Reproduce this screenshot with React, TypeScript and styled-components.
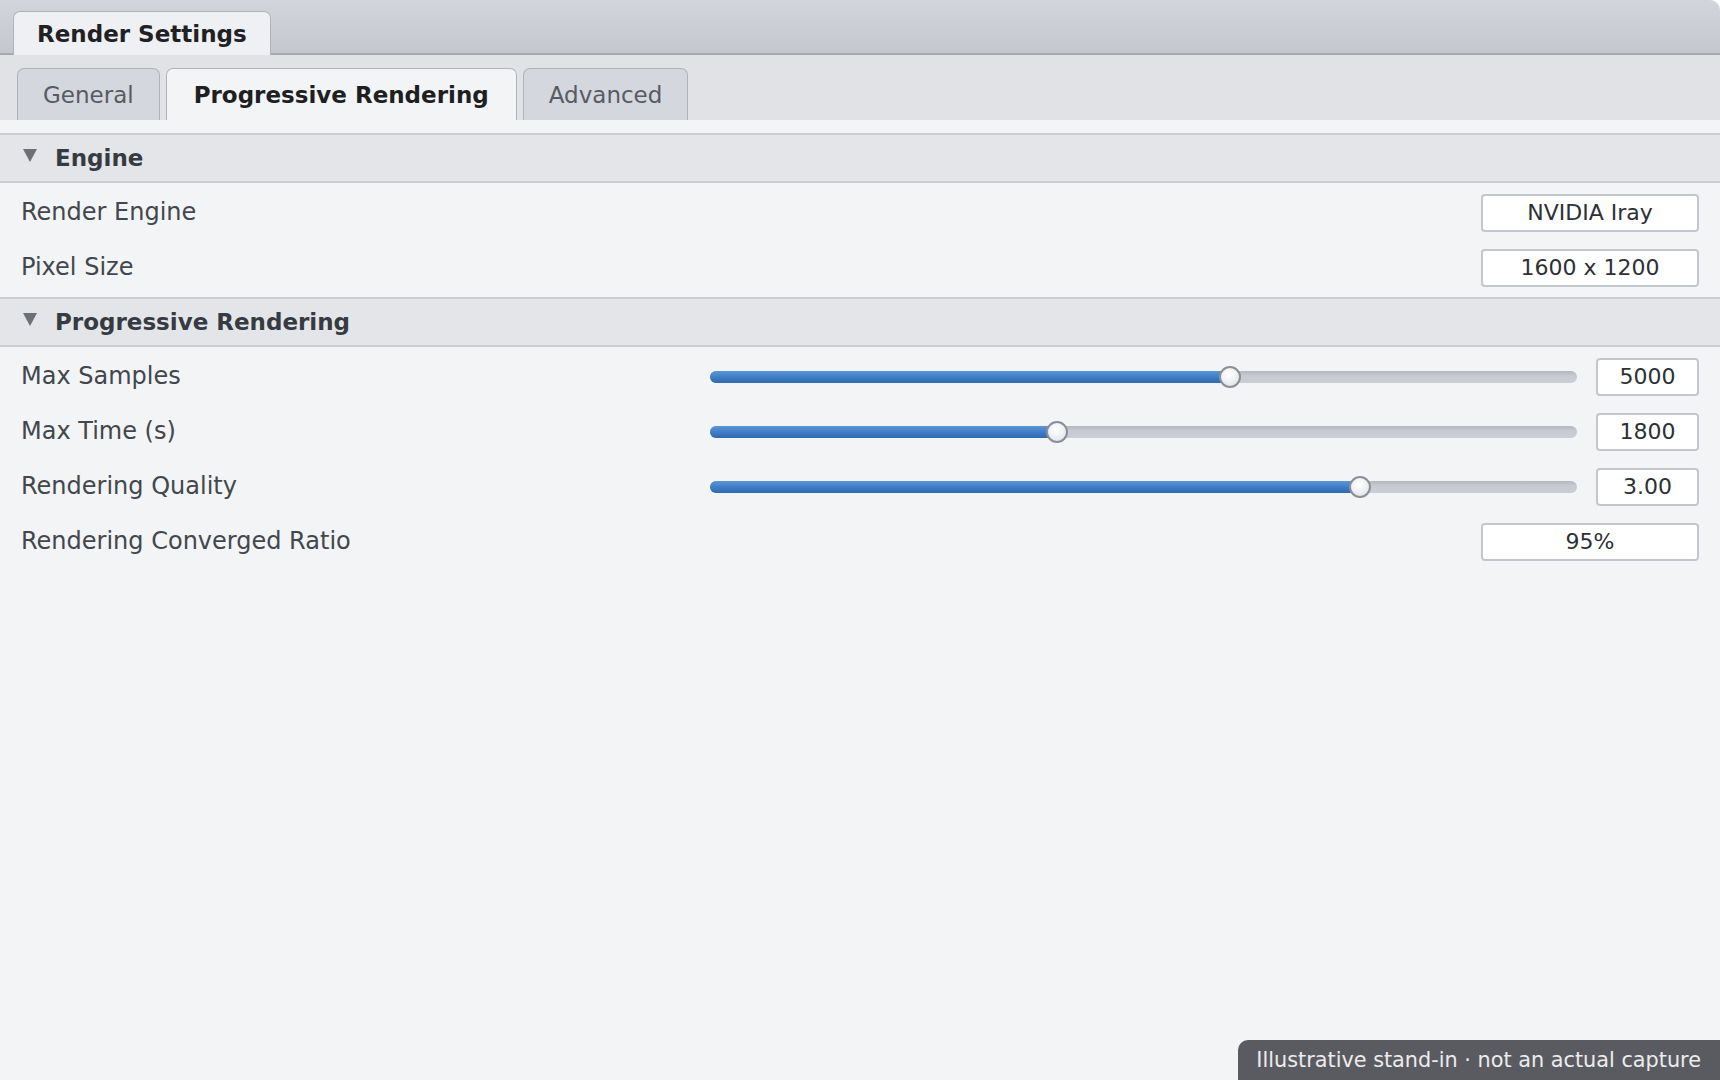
import React from "react";
import styled, { createGlobalStyle } from "styled-components";

const Global = createGlobalStyle`
  html, body { margin: 0; padding: 0; background: #ffffff; }
  body { font-family: "DejaVu Sans", "Liberation Sans", sans-serif; }
  #root { height: 1080px; }
`;

const Window = styled.div`
  height: 1080px;
  display: flex;
  flex-direction: column;
  background: #f3f4f6;
  border-top-right-radius: 10px;
  overflow: hidden;
  position: relative;
`;

const TitleBar = styled.div`
  height: 55px;
  box-sizing: border-box;
  background: linear-gradient(#d3d5db, #c4c7ce);
  border-bottom: 2px solid #a6aab1;
  display: flex;
  align-items: flex-end;
  padding-left: 13px;
`;

const TitleTab = styled.div`
  height: 44px;
  margin-bottom: -2px;
  box-sizing: border-box;
  padding: 0 23px;
  display: flex;
  align-items: center;
  background: #eff0f3;
  border: 1.5px solid #aeb2b9;
  border-bottom: none;
  border-radius: 7px 7px 0 0;
  font-weight: bold;
  font-size: 23px;
  color: #1f2125;
`;

const TabBar = styled.div`
  height: 65px;
  box-sizing: border-box;
  background: #e1e2e6;
  display: flex;
  align-items: flex-end;
  gap: 6px;
  padding-left: 17px;
`;

const Tab = styled.div<{ $active?: boolean }>`
  height: 52px;
  box-sizing: border-box;
  padding: 0 ${(p) => (p.$active ? "27px" : "25px")};
  display: flex;
  align-items: center;
  border: 1.5px solid #b0b4ba;
  border-bottom: none;
  border-radius: 7px 7px 0 0;
  background: ${(p) => (p.$active ? "#f3f4f6" : "#d4d7dd")};
  color: ${(p) => (p.$active ? "#1e1f23" : "#575b62")};
  font-weight: ${(p) => (p.$active ? "bold" : "normal")};
  font-size: 23px;
`;

const Content = styled.div`
  flex: 1;
  padding-top: 13px;
  display: flex;
  flex-direction: column;
`;

const SectionHeader = styled.div`
  height: 50px;
  box-sizing: border-box;
  background: #e4e5e9;
  border-top: 2px solid #cacdd2;
  border-bottom: 2px solid #cacdd2;
  display: flex;
  align-items: center;
  padding-left: 23px;
  gap: 18px;
  font-weight: bold;
  font-size: 23px;
  color: #363a41;
`;

const Caret = styled.span`
  width: 0;
  height: 0;
  border-left: 7px solid transparent;
  border-right: 7px solid transparent;
  border-top: 13px solid #6d7077;
  margin-top: -6px;
`;

const SectionBody = styled.div`
  padding: 2px 21px 2px 21px;
  display: flex;
  flex-direction: column;
`;

const Row = styled.div`
  height: 55px;
  display: flex;
  align-items: center;
`;

const Label = styled.div<{ $fixed?: boolean }>`
  font-size: 24px;
  color: #42464d;
  margin-top: -2px;
  ${(p) => (p.$fixed ? "width: 689px; flex: 0 0 auto;" : "flex: 1;")}
`;

const ValueBox = styled.div<{ $wide?: boolean }>`
  width: ${(p) => (p.$wide ? "218px" : "103px")};
  height: 38px;
  box-sizing: border-box;
  background: #ffffff;
  border: 2px solid #c3c6cc;
  border-radius: 4px;
  display: flex;
  align-items: center;
  justify-content: center;
  font-size: 22px;
  color: #2d3035;
  flex: 0 0 auto;
`;

const Slider = styled.div`
  flex: 1;
  margin-right: 19px;
  height: 12px;
  border-radius: 6px;
  background: linear-gradient(#b4b7bd, #c7cad0 40%, #cbced4);
  position: relative;
`;

const Fill = styled.div`
  height: 100%;
  border-radius: 6px;
  background: linear-gradient(#5b96d6, #3d7cc4 55%, #2f69b1);
`;

const Thumb = styled.div`
  position: absolute;
  top: 50%;
  width: 22px;
  height: 22px;
  box-sizing: border-box;
  border-radius: 50%;
  border: 2px solid #8b8f97;
  background: radial-gradient(circle at 45% 35%, #ffffff 0%, #f1f2f4 45%, #d9dbe0 100%);
  transform: translate(-50%, -50%);
`;

const Badge = styled.div`
  position: absolute;
  right: 0;
  bottom: 0;
  height: 40px;
  box-sizing: border-box;
  padding: 0 19px 0 18px;
  display: flex;
  align-items: center;
  background: #5a5b60;
  color: #ececee;
  font-size: 20.8px;
  border-top-left-radius: 10px;
`;

type SliderRowProps = { label: string; value: string; pct: number };

const SliderRow = ({ label, value, pct }: SliderRowProps) => (
  <Row>
    <Label $fixed>{label}</Label>
    <Slider>
      <Fill style={{ width: `${pct}%` }} />
      <Thumb style={{ left: `${pct}%` }} />
    </Slider>
    <ValueBox>{value}</ValueBox>
  </Row>
);

const FieldRow = ({ label, value }: { label: string; value: string }) => (
  <Row>
    <Label>{label}</Label>
    <ValueBox $wide>{value}</ValueBox>
  </Row>
);

export default function App() {
  return (
    <>
      <Global />
      <Window>
        <TitleBar>
          <TitleTab>Render Settings</TitleTab>
        </TitleBar>
        <TabBar>
          <Tab>General</Tab>
          <Tab $active>Progressive Rendering</Tab>
          <Tab>Advanced</Tab>
        </TabBar>
        <Content>
          <SectionHeader>
            <Caret />
            Engine
          </SectionHeader>
          <SectionBody>
            <FieldRow label="Render Engine" value="NVIDIA Iray" />
            <FieldRow label="Pixel Size" value="1600 x 1200" />
          </SectionBody>
          <SectionHeader>
            <Caret />
            Progressive Rendering
          </SectionHeader>
          <SectionBody>
            <SliderRow label="Max Samples" value="5000" pct={60} />
            <SliderRow label="Max Time (s)" value="1800" pct={40} />
            <SliderRow label="Rendering Quality" value="3.00" pct={75} />
            <FieldRow label="Rendering Converged Ratio" value="95%" />
          </SectionBody>
        </Content>
        <Badge>Illustrative stand-in · not an actual capture</Badge>
      </Window>
    </>
  );
}
